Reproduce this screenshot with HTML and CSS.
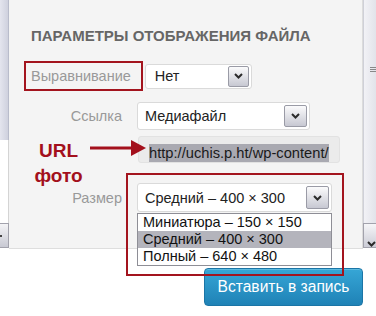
FILE: index.html
```html
<!DOCTYPE html>
<html lang="ru">
<head>
  <meta charset="UTF-8" />
  <title>Параметры отображения файла</title>
  <link rel="stylesheet" href="styles.css">
</head>
<body>

  <div class="screen">
    <div class="edge edge-left">
      <div class="track"></div>
      <div class="blank"></div>
      <div class="nub"><i class="dash"></i></div>
    </div>

    <div class="panel">
      <h3 class="title">Параметры отображения файла</h3>

      <div class="row row-align">
        <span class="label label-marked">Выравнивание</span>
        <div class="select sel-align">
          <span>Нет</span>
          <span class="drop"><svg width="9" height="6" viewBox="0 0 9 6"><polyline points="1,1 4.5,4.5 8,1" /></svg></span>
        </div>
      </div>

      <div class="row row-link">
        <span class="label">Ссылка</span>
        <div class="select sel-link">
          <span>Медиафайл</span>
          <span class="drop"><svg width="9" height="6" viewBox="0 0 9 6"><polyline points="1,1 4.5,4.5 8,1" /></svg></span>
        </div>
      </div>

      <div class="row row-url">
        <div class="label note-cell">
          <div class="note">URL<br>фото</div>
          <svg class="note-arrow" width="57" height="17" viewBox="0 0 57 17">
            <line x1="0" y1="9" x2="44" y2="9" />
            <polygon points="41,1 56,9 41,17" />
          </svg>
        </div>
        <div class="url-field"><span class="picked">http://uchis.p.ht/wp-content/</span></div>
      </div>

      <div class="row row-size">
        <span class="label">Размер</span>
        <div class="size-field">
          <div class="select sel-size">
            <span>Средний – 400 × 300</span>
            <span class="drop"><svg width="9" height="6" viewBox="0 0 9 6"><polyline points="1,1 4.5,4.5 8,1" /></svg></span>
          </div>
          <ul class="options">
            <li>Миниатюра – 150 × 150</li>
            <li class="current">Средний – 400 × 300</li>
            <li>Полный – 640 × 480</li>
          </ul>
        </div>
      </div>
    </div>

    <div class="edge edge-right">
      <div class="track"><i class="grip"></i></div>
      <div class="nub"><svg width="9" height="6" viewBox="0 0 9 6"><polyline points="1,1 4.5,4.5 8,1" /></svg></div>
    </div>
  </div>

  <div class="actions">
    <button class="insert">Вставить в запись</button>
  </div>

</body>
</html>
```

FILE: styles.css
```css
* {
  box-sizing: border-box;
}

body {
  margin: 0;
  width: 376px;
  height: 316px;
  overflow: hidden;
  background-color: white;
  font-family: 'Liberation Sans', Arial, sans-serif;
  color: #222;
}

.screen {
  display: flex;
  height: 249px;
}

/* bits of the neighbouring columns */
.edge {
  display: flex;
  flex-direction: column;
}

.edge-left {
  width: 9px;
}

.edge-left .track {
  height: 140px;
  background: linear-gradient(to right, #e4e5ee, #cfd1de);
  border-right: 1px solid #b9bccb;
}

.edge-left .blank {
  flex: 1;
  background-color: white;
  border-right: 1px solid #d4d4d4;
}

.edge-left .nub {
  height: 25px;
  margin-bottom: 1px;
  background: linear-gradient(#f4f4f6, #c8c9d3);
  border: 1px solid #a2a2ac;
  border-left: none;
  position: relative;
}

.edge-left .dash {
  position: absolute;
  left: 0;
  top: 11px;
  width: 2px;
  height: 2px;
  background-color: #444;
}

.edge-right {
  width: 13px;
}

.edge-right .track {
  flex: 1;
  background: linear-gradient(to right, #f2f2f6, #e2e3ea);
  border-left: 1px solid #cfd0d8;
  position: relative;
}

.edge-right .grip {
  position: absolute;
  left: 6px;
  top: 67px;
  width: 7px;
  height: 5px;
  border-top: 1px solid #888;
  border-bottom: 1px solid #888;
}

.edge-right .grip::after {
  content: '';
  position: absolute;
  left: 0;
  right: 0;
  top: 1px;
  border-top: 1px solid #888;
}

.edge-right .nub {
  height: 25px;
  margin-bottom: 1px;
  padding: 9px 0 0 3px;
  background: linear-gradient(#f6f6f8, #cbccd6);
  border: 1px solid #a2a2ac;
  border-right: none;
}

.panel {
  flex: 1;
  padding: 27px 0 0 22px;
  background-color: #f4f4f4;
  border-right: 1px solid #dcdcdc;
  border-bottom: 1px solid #dedede;
}

.title {
  margin: 0;
  font-size: 15px;
  line-height: 17px;
  font-weight: bold;
  text-transform: uppercase;
  color: #666;
}

.row {
  display: flex;
  align-items: center;
}

.label {
  width: 91px;
  margin-right: 15px;
  text-align: right;
  font-size: 14.5px;
  color: #999;
}

.label-marked {
  width: auto;
  height: 30px;
  margin: 0 2px 0 -7px;
  padding: 0 10px 0 5px;
  line-height: 26px;
  text-align: left;
  border: 2px solid #a3141e;
}

.row-align {
  margin-top: 17px;
}

.row-link {
  margin-top: 11px;
}

.row-url {
  margin-top: 6px;
  align-items: flex-start;
}

.row-size {
  margin-top: 20px;
}

.select {
  display: flex;
  align-items: center;
  justify-content: space-between;
  padding-left: 7px;
  padding-right: 2px;
  background-color: white;
  border: 1px solid #dadada;
  border-radius: 3px;
  font-size: 14.5px;
  color: #222;
}

.drop {
  display: flex;
  align-items: center;
  justify-content: center;
  width: 23px;
  height: 22px;
  background: linear-gradient(#fbfbfc, #c7c8d2);
  border: 1px solid #9a9ba6;
  border-radius: 2px;
}

svg polyline {
  fill: none;
  stroke: #2b2b2b;
  stroke-width: 2;
}

.sel-align {
  width: 107px;
  height: 25px;
  padding-left: 9px;
}

.sel-align .drop {
  width: 21px;
  height: 21px;
}

.sel-link {
  width: 173px;
  height: 28px;
}

.sel-size {
  width: 195px;
  height: 29px;
}

.sel-size .drop {
  height: 23px;
}

/* URL field with selected text */
.note-cell {
  position: relative;
  height: 27px;
}

.note {
  position: absolute;
  left: 0;
  top: 2px;
  width: 55px;
  text-align: center;
  font-size: 19px;
  line-height: 25px;
  font-weight: bold;
  color: #a3101c;
}

.note-arrow {
  position: absolute;
  left: 59px;
  top: 3px;
  z-index: 2;
}

.note-arrow line {
  stroke: #a3101c;
  stroke-width: 3;
}

.note-arrow polygon {
  fill: #a3101c;
}

.url-field {
  width: 202px;
  height: 27px;
  margin-left: 1px;
  padding: 7px 0 0 10px;
  background-color: #ebebeb;
  border: 1px solid #e2e2e2;
  border-radius: 3px;
  font-size: 14.7px;
  line-height: 18px;
  white-space: nowrap;
  overflow: hidden;
}

.picked {
  display: inline-block;
  background-color: #a9a9b1;
  color: #1a1a1a;
}

/* open size dropdown with its red frame */
.size-field {
  position: relative;
  z-index: 3;
}

.size-field::after {
  content: '';
  position: absolute;
  left: -11px;
  top: -10px;
  right: -12px;
  bottom: -64px;
  border: 2px solid #a3141e;
  pointer-events: none;
}

.options {
  position: absolute;
  left: 0;
  top: calc(100% + 1px);
  width: 100%;
  margin: 0;
  padding: 0;
  list-style: none;
  background-color: white;
  border: 1px solid #8e8e96;
  font-size: 14.5px;
  line-height: 17px;
  color: #111;
}

.options li {
  padding-left: 5px;
}

.options .current {
  background-color: #b4b4bc;
}

.actions {
  display: flex;
  justify-content: flex-end;
  padding: 19px 13px 0 0;
}

.insert {
  width: 159px;
  height: 38px;
  padding: 0;
  background: linear-gradient(#36a6d6, #1f82b6);
  border: 1px solid #1b75a6;
  border-radius: 4px;
  box-shadow: inset 0 1px 0 rgba(120, 200, 230, 0.6);
  font-family: 'Liberation Sans', Arial, sans-serif;
  font-size: 15.6px;
  color: white;
}
```
